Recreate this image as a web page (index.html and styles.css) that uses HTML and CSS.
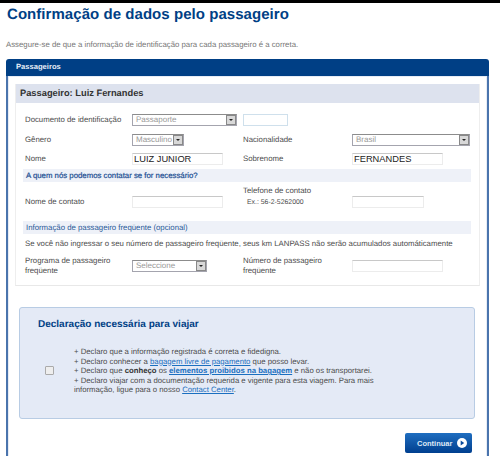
FILE: index.html
```html
<!DOCTYPE html>
<html lang="pt">
<head>
<meta charset="utf-8">
<title>Confirmação de dados pelo passageiro</title>
<link rel="stylesheet" href="styles.css">
</head>
<body>
<div class="topbar"></div>
<h1 class="title">Confirmação de dados pelo passageiro</h1>
<p class="intro">Assegure-se de que a informação de identificação para cada passageiro é a correta.</p>
<section class="panel">
  <h2 class="panel-head">Passageiros</h2>
  <div class="panel-body">
    <div class="card">
      <h3 class="card-head">Passageiro: Luiz Fernandes</h3>
      <div class="row row-doc">
        <span class="label">Documento de identificação</span>
        <div class="doc-controls">
          <div class="select select-doc"><span>Passaporte</span><i class="arrow"></i></div>
          <input class="input input-num" type="text">
        </div>
      </div>
      <div class="row row-gen">
        <span class="label">Gênero</span>
        <div class="select select-gen"><span>Masculino</span><i class="arrow"></i></div>
        <span class="label">Nacionalidade</span>
        <div class="select select-nat"><span>Brasil</span><i class="arrow"></i></div>
      </div>
      <div class="row row-name">
        <span class="label">Nome</span>
        <input class="input input-w value" type="text" value="LUIZ JUNIOR">
        <span class="label">Sobrenome</span>
        <input class="input input-w value" type="text" value="FERNANDES">
      </div>
      <h4 class="band band-q">A quem nós podemos contatar se for necessário?</h4>
      <div class="row row-contact">
        <span class="label">Nome de contato</span>
        <input class="input input-w" type="text">
        <div class="phone"><span class="label">Telefone de contato</span><small class="hint">Ex.: 56-2-5262000</small></div>
        <input class="input input-p" type="text">
      </div>
      <h4 class="band band-f">Informação de passageiro freqüente (opcional)</h4>
      <p class="note">Se você não ingressar o seu número de passageiro freqüente, seus km LANPASS não serão acumulados automáticamente</p>
      <div class="row row-prog">
        <span class="label">Programa de passageiro<br>freqüente</span>
        <div class="select select-prog"><span>Seleccione</span><i class="arrow"></i></div>
        <span class="label">Número de passageiro<br>freqüente</span>
        <input class="input input-w" type="text">
      </div>
    </div>
    <div class="decl">
      <h3 class="decl-title">Declaração necessária para viajar</h3>
      <div class="decl-body">
        <input class="check" type="checkbox" aria-label="Aceito">
        <p class="decl-text">+ Declaro que a informação registrada é correta e fidedigna.<br>
        + Declaro conhecer a <a href="#">bagagem livre de pagamento</a> que posso levar.<br>
        + Declaro que <b>conheço</b> os <a href="#" class="strong">elementos proibidos na bagagem</a> e não os transportarei.<br>
        + Declaro viajar com a documentação requerida e vigente para esta viagem. Para mais informação, ligue para o nosso <a href="#">Contact Center</a>.</p>
      </div>
    </div>
    <div class="actions">
      <button class="btn" type="button">Continuar
        <svg class="btn-icon" width="10" height="10" viewBox="0 0 10 10" aria-hidden="true"><circle cx="5" cy="5" r="5" fill="#fff"/><path d="M3.7 2.5 7.2 5 3.7 7.5Z" fill="#0a4a9c"/></svg>
      </button>
    </div>
  </div>
</section>
</body>
</html>
```
FILE: styles.css
```css
* { box-sizing: border-box; }
html, body { margin: 0; padding: 0; }
body {
  width: 500px;
  height: 456px;
  overflow: hidden;
  background: #fff;
  font-family: "Liberation Sans", Arial, sans-serif;
  font-size: 7.8px;
  color: #4c4c4c;
  text-rendering: geometricPrecision;
}
.topbar { height: 3px; background: #000; }
.title {
  margin: 2px 0 0 7px;
  height: 20px;
  font-size: 15px;
  line-height: 20px;
  font-weight: bold;
  letter-spacing: 0.05px;
  color: #003f85;
}
.intro {
  margin: 14px 0 0 6px;
  height: 12px;
  font-size: 7.8px;
  line-height: 12px;
  color: #777;
}
.panel {
  margin: 8px 0 0 6px;
  width: 483px;
  height: 397px;
  border-radius: 3px 3px 0 0;
  overflow: hidden;
}
.panel-head {
  margin: 0;
  height: 17px;
  padding-left: 10px;
  background: #003f85;
  color: #e8eef8;
  font-size: 7.6px;
  line-height: 16px;
  font-weight: bold;
}
.panel-body {
  height: 380px;
  padding: 8px 7px 0 7px;
  border-left: 2px solid #4a74ad;
  border-right: 2px solid #4a74ad;
  box-shadow: inset 1px 1px 0 #e6ecf5, inset -1px 0 0 #e6ecf5;
}
.card {
  height: 202px;
  border-bottom: 1px solid #e8e8e8;
  border-left: 1px solid #eee;
  border-right: 1px solid #eee;
}
.card-head {
  margin: 0;
  height: 19px;
  padding-left: 4px;
  background: #dde2ee;
  color: #333;
  font-size: 9.3px;
  line-height: 18px;
  font-weight: bold;
}
.row {
  display: grid;
  grid-template-columns: 107px 111px 109px 128px;
  align-items: center;
  padding-left: 9px;
}
.label { font-size: 7.8px; line-height: 9.5px; color: #4c4c4c; }
.row-doc { margin-top: 8px; height: 18px; grid-template-columns: 107px auto; }
.doc-controls { display: flex; align-items: center; gap: 6px; }
.row-gen { height: 20px; margin-top: 1px; }
.row-name { height: 18px; }
.row-contact { height: 39px; }
.row-prog { height: 29px; margin-top: 2px; }
.select {
  display: flex;
  align-items: center;
  justify-content: space-between;
  height: 12px;
  padding-left: 3px;
  border: 1px solid #a4a4ae;
  border-top-color: #8c8c8c;
  background: #fff;
  color: #999;
  font-size: 8px;
  line-height: 10px;
}
.select-doc { width: 105px; }
.select-gen { width: 52px; }
.select-nat { width: 118px; }
.select-prog { width: 75px; }
.arrow {
  position: relative;
  flex: none;
  width: 10px;
  height: 10px;
  background: #d8d8d8;
  border: 1px solid #888;
}
.arrow::after {
  content: "";
  position: absolute;
  left: 2px;
  top: 3px;
  border: 2px solid transparent;
  border-top: 2.5px solid #222;
  border-bottom: 0;
}
.input {
  display: block;
  height: 12px;
  margin: 0;
  padding: 0 1px;
  border: 1px solid #ececec;
  border-top-color: #c8c8c8;
  background: #fff;
  font-family: inherit;
  font-size: 9px;
  color: #222;
  outline: 0;
}
.input-num { width: 45px; border-color: #cfe0ec; }
.input-w { width: 91px; }
.input-p { width: 72px; }
.value { font-size: 9.3px; }
.band {
  margin: 1px 8px 0 7px;
  height: 13px;
  padding-left: 3px;
  font-size: 7.8px;
  line-height: 13px;
  font-weight: normal;
  background: #eef1f8;
}
.band-q { color: #1c4f93; -webkit-text-stroke: 0.2px #1c4f93; }
.band-f { margin-top: 0; color: #2a5a98; }
.phone {
  display: flex;
  flex-direction: column;
  gap: 2.5px;
  align-self: start;
  padding-top: 4px;
}
.hint { padding-left: 4px; font-size: 6.9px; line-height: 10px; color: #4c4c4c; }
.note {
  margin: 4px 0 0 9px;
  height: 11px;
  font-size: 7.8px;
  line-height: 11px;
  white-space: nowrap;
  color: #4c4c4c;
}
.decl {
  margin: 21px 0 0 4px;
  width: 456px;
  height: 112px;
  padding: 10px 0 0 18px;
  background: #e4eaf6;
  border: 1px solid #b8cce4;
  border-radius: 3px;
}
.decl-title {
  margin: 0;
  height: 14px;
  font-size: 10px;
  line-height: 14px;
  font-weight: bold;
  color: #003f85;
}
.decl-body { display: flex; align-items: center; margin-top: 15px; }
.check {
  appearance: none;
  flex: none;
  width: 9px;
  height: 9px;
  margin: 0 20px 0 7px;
  border: 1px solid #aaa;
  background: #eee;
  border-radius: 1px;
}
.decl-text {
  margin: 0;
  width: 310px;
  font-size: 7.75px;
  line-height: 9.5px;
  color: #4c4c4c;
}
.decl-text a { color: #1a6fc0; }
.decl-text a.strong { font-weight: bold; }
.decl-text b { color: #333; }
.actions { display: flex; justify-content: flex-end; margin: 14px 8px 0 0; }
.btn {
  display: flex;
  align-items: center;
  gap: 5px;
  width: 67px;
  height: 20px;
  padding: 0 0 0 12px;
  border: 0;
  border-radius: 2px;
  background: linear-gradient(#1f6ec0, #003f8f);
  color: #dfe8f6;
  font-family: inherit;
  font-size: 7.5px;
  font-weight: bold;
}
```
